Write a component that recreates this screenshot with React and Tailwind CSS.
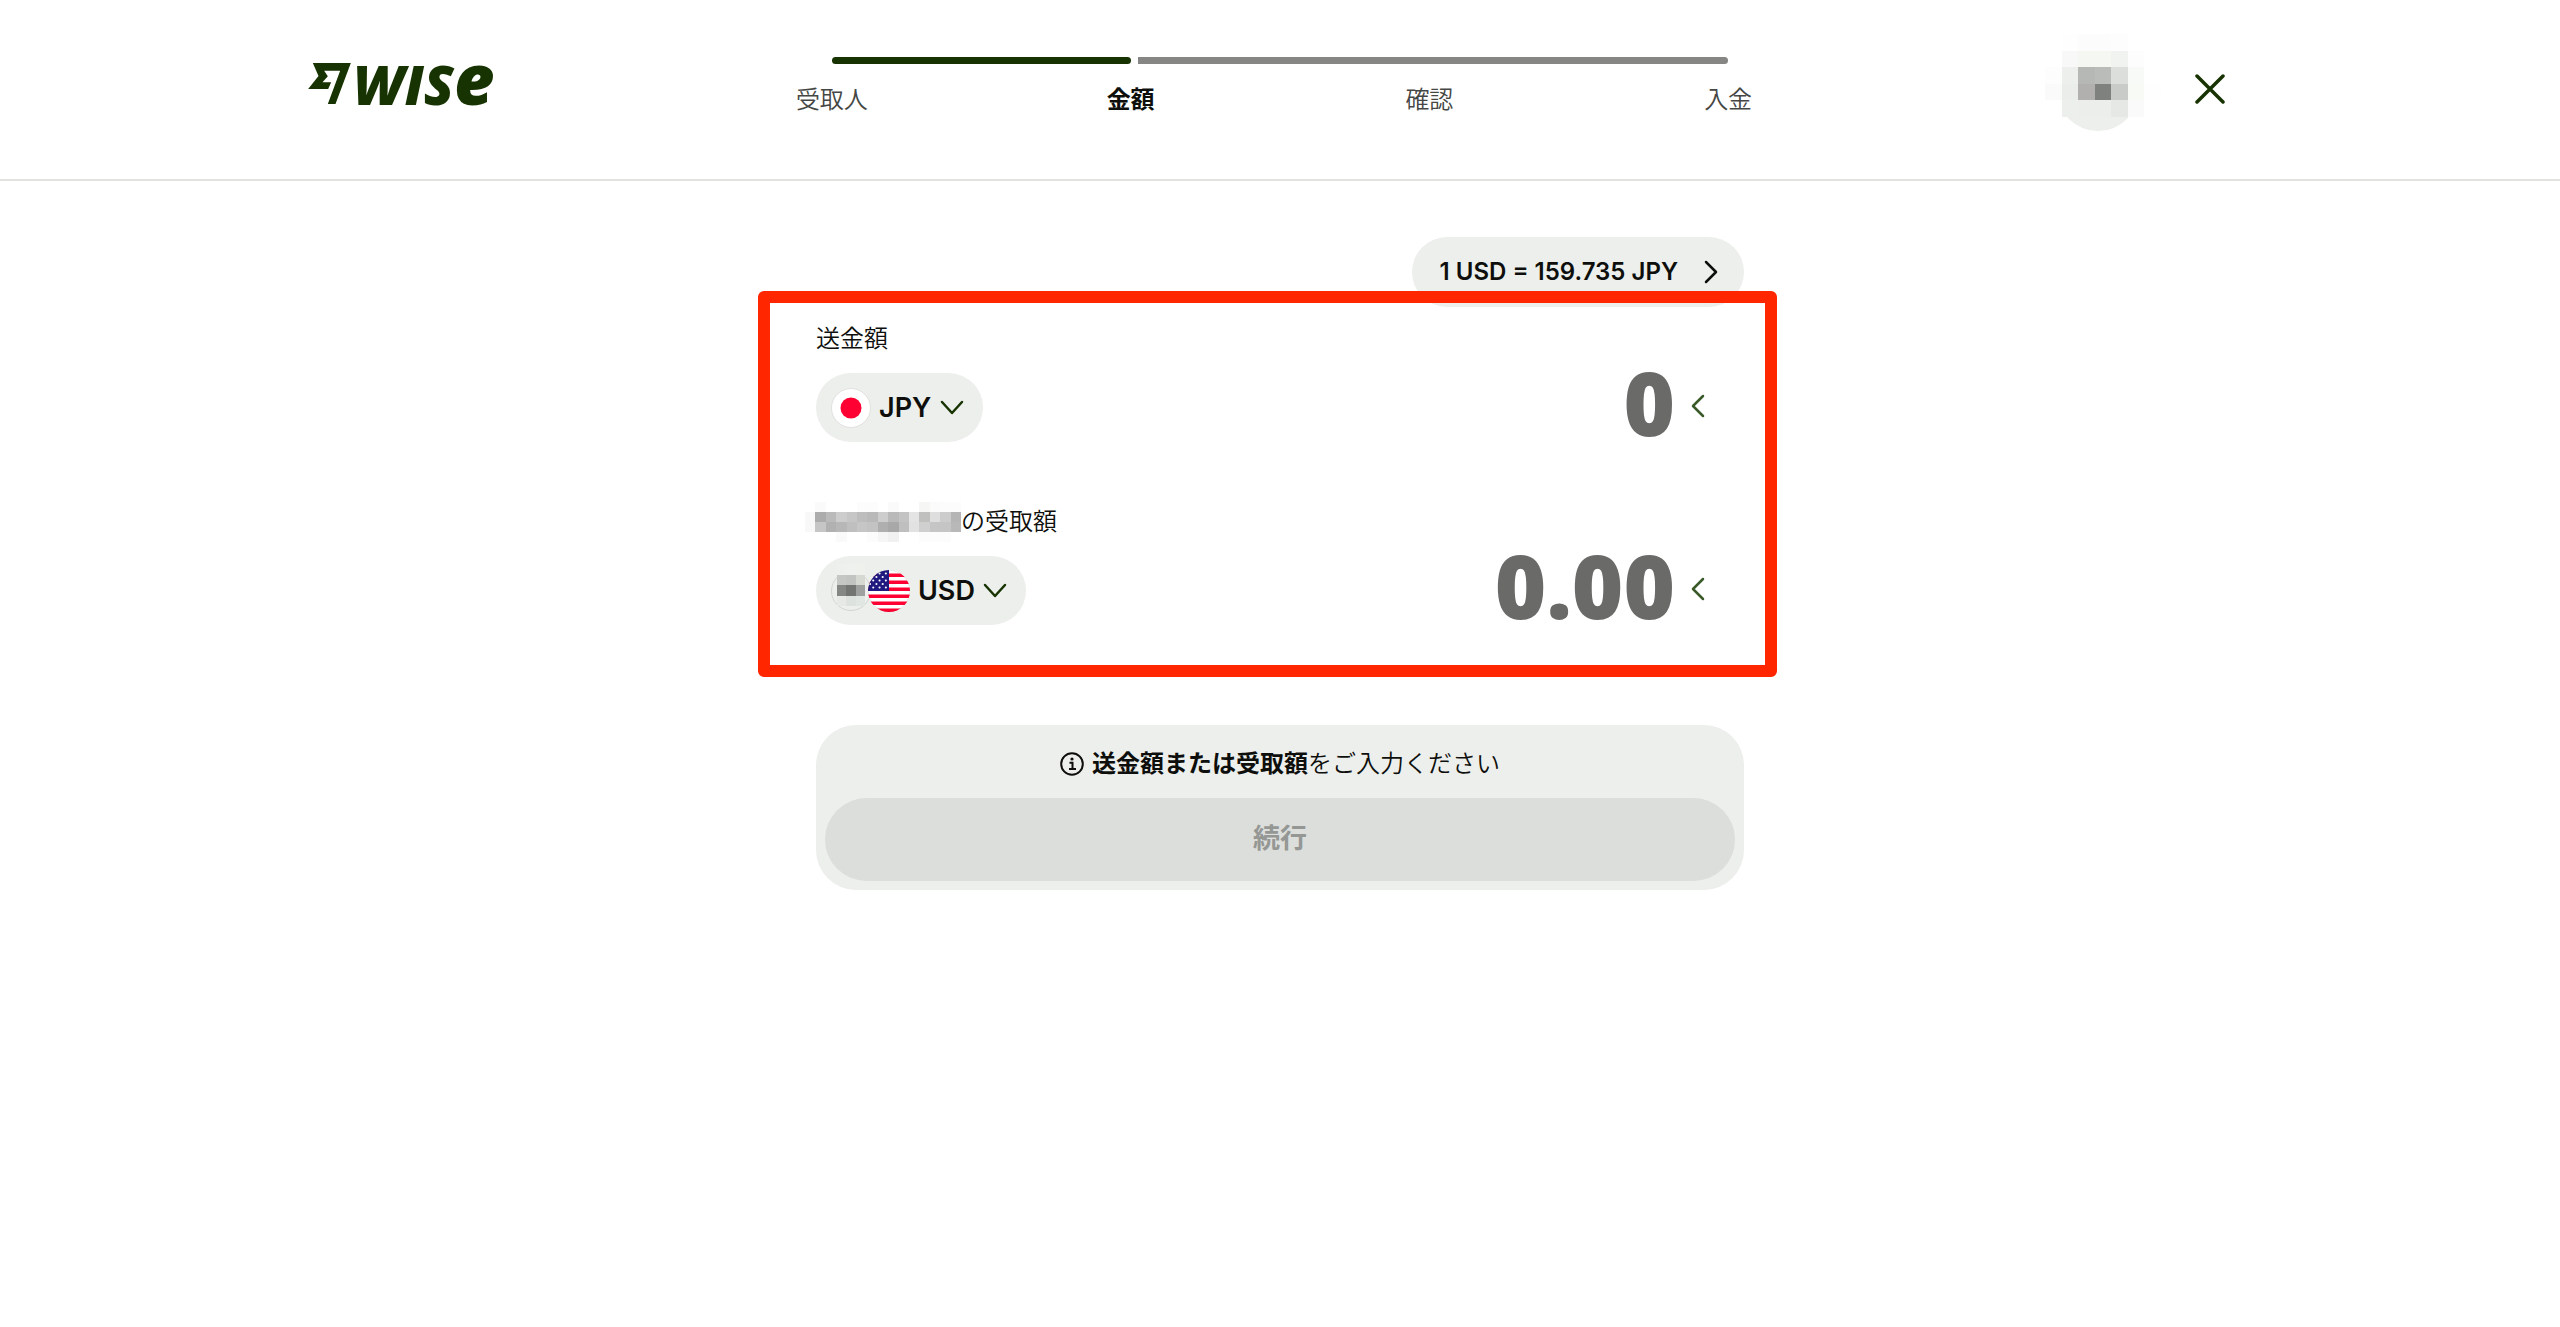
import React, { useState } from "react";

const STEPS = ["受取人", "金額", "確認", "入金"];
const ACTIVE_STEP = 1;

// Pixelated blocks that hide personal data. "" leaves the cell empty.
const AVATAR_CELLS = [
  ["", "#fefefe", "#fcfcfc", "#fcfcfc", "#fdfdfd", "", ""],
  ["#fff", "#f8f8f8", "#f5f7f2", "#f5f7f2", "#f1f3f0", "#fdfdfd", ""],
  ["#fdfdfd", "#edefec", "#b6b8b5", "#babcb9", "#dcdedb", "#f8faf7", ""],
  ["#fafafa", "#ebedea", "#b1b0ae", "#7f817e", "#c9cbc8", "#f8faf6", "#fefefe"],
  ["#fff", "#edefec", "#eceeeb", "#eceeeb", "#e6e8e5", "#fafafa", ""],
];

const NAME_CELLS = [
  ["", "#fafafa", "", "", "", "#fcfcfc", "#fcfcfc", "", "#fafafa", "", "", "#f6f6f4", "#fbfbfb", "#fcfcfc", "#fcfcfc"],
  ["#f8f8f8", "#acacac", "#bababa", "#cdcdcd", "#c6c6c6", "#bdbdbd", "#b9b9b9", "#cdcdcd", "#b9b9b9", "#c3c3c3", "#e4e4e4", "#c0c0be", "#dededf", "#cccccc", "#b5b5b5"],
  ["#f8f8f8", "#c6c6c6", "#b1b1b1", "#b7b7b7", "#bfbfbf", "#c6c6c6", "#c3c3c3", "#afafaf", "#a8a8a8", "#bfbfbf", "#e2e2e2", "#cfcfcf", "#c5c5c5", "#c5c5c5", "#b8b8b8"],
  ["", "", "", "#fafafa", "", "", "#fcfcfc", "#f6f6f6", "#f1f1f1", "", "", "#fcfcfc", "#fcfcfc", "#fcfcfc", ""],
];

const ACCOUNT_CELLS = [
  ["#eef0ed", "#eff1ee", "#eff1ec"],
  ["#c5c7c4", "#c2c4c1", "#d6d8d2"],
  ["#858784", "#737572", "#9da09e"],
  ["#e6e9e6", "#dde2df", "#e0e6e1"],
];

const Mosaic = ({ cells, size, className }) => (
  <svg
    className={className}
    viewBox={`0 0 ${cells[0].length * size} ${cells.length * size}`}
    preserveAspectRatio="none"
    shapeRendering="crispEdges"
    aria-hidden="true"
  >
    {cells.map((row, y) =>
      row.map((fill, x) =>
        fill ? (
          <rect key={`${x}-${y}`} x={x * size} y={y * size} width={size} height={size} fill={fill} />
        ) : null
      )
    )}
  </svg>
);

const Chevron = ({ d, className }) => (
  <svg className={className} fill="none" stroke="currentColor" strokeLinecap="round" strokeLinejoin="round" aria-hidden="true">
    <path d={d} />
  </svg>
);

const JapanFlag = () => (
  <svg className="w-10 h-10" viewBox="0 0 40 40" aria-hidden="true">
    <circle cx="20" cy="20" r="19.5" fill="#fff" stroke="#dfe1de" />
    <circle cx="20" cy="20" r="10.5" fill="#ff0032" />
  </svg>
);

const UsFlag = () => (
  <svg className="w-[42px] h-[42px]" viewBox="0 0 120 120" aria-hidden="true">
    <clipPath id="us-round">
      <circle cx="60" cy="60" r="60" />
    </clipPath>
    <g clipPath="url(#us-round)">
      <rect width="120" height="120" fill="#fff" />
      {[10, 30, 50, 70, 90, 110].map((y) => (
        <rect key={y} y={y} width="120" height="10" fill="#ff0032" />
      ))}
      <rect width="60" height="60" fill="#201a80" />
      {[10, 20, 30, 40, 50].map((y, row) =>
        [6, 24, 42].map((x) => (
          <circle key={`${x}-${y}`} cx={x + (row % 2 ? 0 : 9)} cy={y} r="3" fill="#fff" />
        ))
      )}
    </g>
    <circle cx="60" cy="60" r="59" fill="none" stroke="#000" strokeOpacity="0.1" strokeWidth="2" />
  </svg>
);

const Logo = () => (
  <a href="#" aria-label="Wise" className="flex items-center gap-0.5 text-[#173301]">
    <svg className="w-[43px] h-[41px]" viewBox="0 0 128 123" fill="currentColor" aria-hidden="true">
      <path d="M14 0H128L82 123H59L96 23H48L59 40L43 58H69L60 78H0L31 39Z" />
    </svg>
    <span className="flex items-baseline pb-1.5 font-['Open_Sans',sans-serif] font-black italic leading-[42px]">
      <span className="text-[55px]">WIS</span>
      <span className="text-[70px]">e</span>
    </span>
  </a>
);

const Stepper = () => (
  <nav aria-label="進捗" className="w-full pb-1">
    <div className="flex gap-[7px] h-[7px] mx-[12.5%]">
      <div className="w-1/3 rounded-full bg-[#173301]" />
      <div className="flex-1 rounded-r-full bg-[#868685]" />
    </div>
    <ol className="grid grid-cols-4 mt-[18px] text-2xl leading-9 text-center text-[#454745]">
      {STEPS.map((step, i) => (
        <li key={step} className={i === ACTIVE_STEP ? "font-semibold text-[#0e0f0c]" : "font-[350]"}>
          {step}
        </li>
      ))}
    </ol>
  </nav>
);

const AmountRow = ({ id, label, currency, flags, value, onChange }) => (
  <div>
    <label htmlFor={id} className="flex items-center h-9 text-2xl font-[350]">
      {label}
    </label>
    <div className="flex items-center justify-between h-[69px] mt-4">
      <div className="flex items-center h-full pl-[15px] pr-[19px] rounded-full bg-[#edefec]">
        {flags}
        <select
          aria-label="通貨"
          className="ml-2 mr-2 appearance-none bg-transparent text-[27px] leading-9 font-semibold"
        >
          <option>{currency}</option>
        </select>
        <Chevron className="w-6 h-4 stroke-[2.5] text-[#173301]" d="M2 2L12 13L22 2" />
      </div>
      <div className="flex items-center flex-1 min-w-0 gap-4 pr-[39px] pb-1">
        <input
          id={id}
          type="text"
          inputMode="decimal"
          value={value}
          onChange={(e) => onChange(e.target.value)}
          className="w-full min-w-0 h-24 pb-2 font-['Noto_Sans',sans-serif] font-black text-[88px] leading-[88px] text-right text-[#6a6b69] focus:outline-none"
        />
        <Chevron className="w-3.5 h-6 shrink-0 stroke-[2.5] text-[#3b5a2a]" d="M12 2L2 12L12 22" />
      </div>
    </div>
  </div>
);

const App = () => {
  const [source, setSource] = useState("0");
  const [target, setTarget] = useState("0.00");

  return (
    <div className="min-h-screen bg-white text-[#0e0f0c] font-['Inter','Noto_Sans_CJK_JP',sans-serif]">
      {/* Header */}
      <header className="border-b-2 border-[#e2e3e1]">
        <div className="grid grid-cols-[1fr_minmax(0,1195px)_1fr] items-center h-[179px] max-w-[1944px] mx-auto">
          <div className="pb-3">
            <Logo />
          </div>
          <Stepper />
          <div className="flex items-center justify-end gap-2">
            <button type="button" aria-label="アカウント" className="relative w-28 h-[88px]">
              <span className="absolute left-[9px] top-[3px] w-[82px] h-[82px] rounded-full bg-[#edefec]" />
              <Mosaic cells={AVATAR_CELLS} size={16} className="absolute -left-[3px] -top-3 w-[116px] h-[83px]" />
            </button>
            <button type="button" aria-label="閉じる" className="flex items-center justify-center w-[84px] h-[84px]">
              <Chevron className="w-8 h-8 stroke-[3.5] text-[#173301]" d="M3 2L29 28M29 2L3 28" />
            </button>
          </div>
        </div>
      </header>

      {/* Calculator */}
      <main className="max-w-[928px] mx-auto pt-14">
        <div className="flex justify-end">
          <button
            type="button"
            className="flex items-center gap-[26px] h-[70px] pl-7 pr-[26px] rounded-full bg-[#edefec] text-2xl font-semibold"
          >
            1 USD = 159.735 JPY
            <Chevron className="w-3.5 h-6 stroke-[2.5]" d="M2 2L12 12L2 22" />
          </button>
        </div>

        <section className="relative pt-3.5 pb-[100px]">
          <div className="flex flex-col gap-[62px]">
            <AmountRow
              id="source"
              label="送金額"
              currency="JPY"
              value={source}
              onChange={setSource}
              flags={<JapanFlag />}
            />
            <AmountRow
              id="target"
              label={
                <>
                  <Mosaic cells={NAME_CELLS} size={10} className="w-[156px] h-10 -ml-[11px]" />
                  の受取額
                </>
              }
              currency="USD"
              value={target}
              onChange={setTarget}
              flags={
                <>
                  <span className="flex items-center justify-center w-10 h-10 -mr-[3px] rounded-full border border-[#d3d5d2]">
                    <Mosaic cells={ACCOUNT_CELLS} size={10} className="w-7 h-[42px] -mt-3" />
                  </span>
                  <UsFlag />
                </>
              }
            />
          </div>
          {/* Highlight frame */}
          <div className="absolute -left-[58px] -right-[33px] -top-4 bottom-12 border-12 border-[#ff2600] rounded-md pointer-events-none" />
        </section>

        <section className="rounded-[40px] bg-[#edefec] p-[9px]">
          <p className="flex items-center justify-center h-16 pb-1 text-2xl">
            <svg className="w-6 h-6 mr-2" viewBox="0 0 24 24" fill="none" stroke="currentColor" strokeWidth="2" aria-hidden="true">
              <circle cx="12" cy="12" r="10.8" />
              <path d="M9.5 10.7H12.5V17M9 17H16" />
              <circle cx="12" cy="7" r="1.6" fill="currentColor" stroke="none" />
            </svg>
            <strong className="font-semibold">送金額または受取額</strong>
            <span className="font-[350]">をご入力ください</span>
          </p>
          <button
            type="button"
            disabled
            className="w-full h-[83px] rounded-full bg-[#dcdedb] text-[27px] font-semibold text-[#959794]"
          >
            続行
          </button>
        </section>
      </main>
    </div>
  );
};

export default App;
